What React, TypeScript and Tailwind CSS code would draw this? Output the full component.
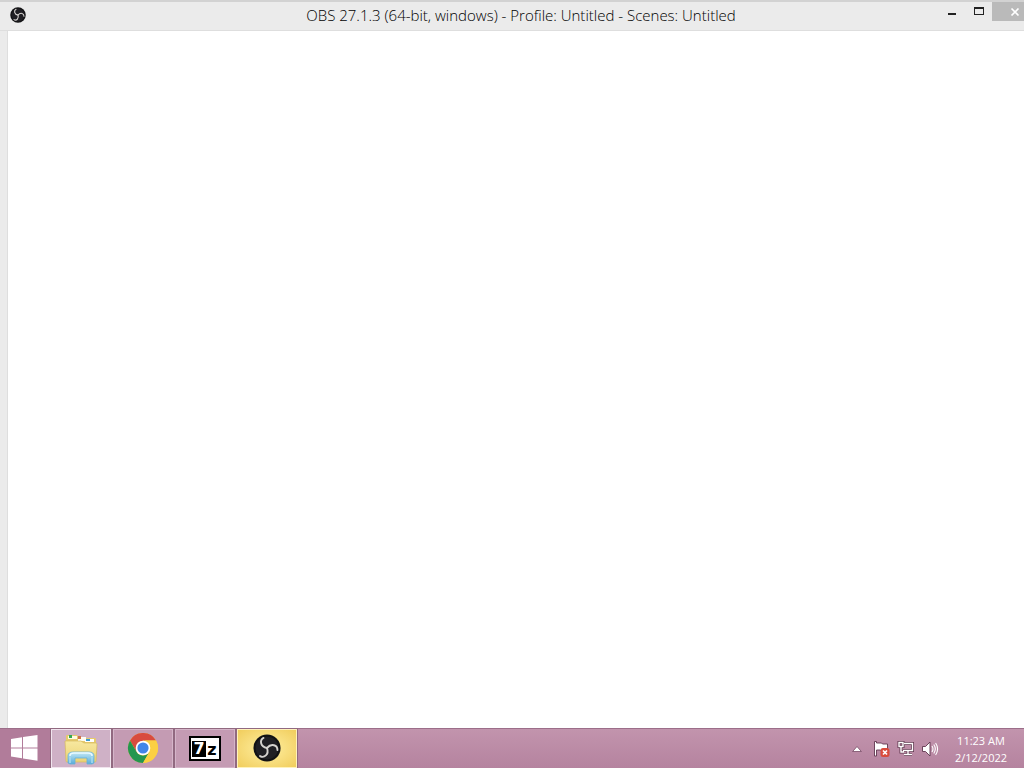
import type { ReactNode } from 'react';
import clsx from 'clsx';

interface TaskItem {
  label: string;
  icon: ReactNode;
  className: string;
}

function ObsIcon({ className }: { className: string }) {
  return (
    <svg className={className} viewBox="0 0 32 32" fill="none" aria-hidden="true">
      <circle cx="16" cy="16" r="15.5" fill="#121214" />
      <circle cx="16" cy="16" r="13" fill="#201f24" />
      <g stroke="#d5d2cf" strokeWidth="2.2" strokeLinecap="round">
        <path d="M12 4.5C7.5 7 8 14.500 16 16" />
        <path d="M12 4.5C7.5 7 8 14.500 16 16" transform="rotate(120 16 16)" />
        <path d="M12 4.5C7.5 7 8 14.500 16 16" transform="rotate(240 16 16)" />
      </g>
    </svg>
  );
}

function WindowsLogo() {
  return (
    <svg className="h-7 w-7" viewBox="0 0 28 28" fill="#fff" aria-hidden="true">
      <path d="M1 4L12 2.3V12.4H1zM13 2.1L27.5 0V12.4H13zM1 13.4H12V23.2L1 21.6zM13 13.4H27.5V25.7L13 23.5z" />
    </svg>
  );
}

function ExplorerIcon() {
  return (
    <svg className="h-8 w-9" viewBox="0 0 36 32" aria-hidden="true">
      <defs>
        <linearGradient id="folder" x1="0" y1="0" x2="0" y2="1">
          <stop offset="0" stopColor="#f7e8a0" />
          <stop offset="1" stopColor="#ecd375" />
        </linearGradient>
        <linearGradient id="stand" x1="0" y1="0" x2="0" y2="1">
          <stop offset="0" stopColor="#c5e9f5" />
          <stop offset="1" stopColor="#58acd9" />
        </linearGradient>
      </defs>
      <path d="M3 5V3q0-1 1-1h10l2 3h16q1 0 1 1v4H3z" fill="#e6cb6c" />
      <path d="M5 3h9v3H5z" fill="#fffbe2" />
      <path d="M6 2h3v3H6z" fill="#33a852" />
      <path d="M15 4h8v4h-8z" fill="#fffdf2" />
      <path d="M15 3h3v3h-3z" fill="#cf7448" />
      <path d="M22 6h9v3h-9z" fill="#fff" />
      <path d="M23 6h4v2h-4z" fill="#3f9cd0" />
      <path d="M2 8h16l3 2h12q1 0 1 1l-1 17q0 1-1 1H4q-1 0-1-1z" fill="url(#folder)" stroke="#d6b95e" strokeWidth=".7" />
      <path d="M5 30V23q0-4 5-4h16q5 0 5 4v7l-2 1h-5v-6H12v6H7z" fill="url(#stand)" stroke="#64b0d8" strokeWidth=".8" />
      <path d="M7 23q0-3 4-3h14q4 0 4 3" fill="none" stroke="#e9faff" strokeWidth="1.5" />
      <path d="M7 24v6M29 24v6" stroke="#a9dcef" strokeWidth="1.5" />
    </svg>
  );
}

function ChromeIcon() {
  return (
    <svg className="h-8 w-8" viewBox="0 0 32 32" aria-hidden="true">
      <circle cx="16" cy="15" r="15" fill="#fbd043" />
      <path d="M16 15L9.5 18.8 3 7.5A15 15 0 0 1 29 7.5H16z" fill="#d84b3f" />
      <path d="M3 7.5L9.5 18.8A7.5 7.5 0 0 0 22.5 18.8L16 30A15 15 0 0 1 3 7.5z" fill="#24964f" />
      <path d="M16 7.5H29A15 15 0 0 1 16 30L22.5 18.8A7.5 7.5 0 0 0 16 7.5z" fill="#fbd043" />
      <circle cx="16" cy="15" r="7.3" fill="#fff" />
      <circle cx="16" cy="15" r="5.6" fill="#4285e8" />
    </svg>
  );
}

function SevenZipIcon() {
  return (
    <span className="flex h-[25px] w-8 items-center justify-center border-2 border-black bg-white font-['DejaVu_Sans',sans-serif] text-base leading-none font-bold text-black">
      <span className="flex h-4 w-3.5 items-center justify-center bg-black text-white">7</span>
      <span className="w-3 pt-0.5 text-center">z</span>
    </span>
  );
}

const tasks: TaskItem[] = [
  { label: 'File Explorer', icon: <ExplorerIcon />, className: 'border-[#f1e4ee] bg-[#cfb1c6]' },
  { label: 'Google Chrome', icon: <ChromeIcon />, className: 'border-[#d5b5c9] bg-[#c49bb3]' },
  { label: '7-Zip', icon: <SevenZipIcon />, className: 'border-[#d5b5c9] bg-[#c49bb3]' },
  {
    label: 'OBS Studio',
    icon: <ObsIcon className="h-7 w-7" />,
    className: 'border-[#fff2bb] bg-radial from-[#fff0a0] to-[#f1cd5b] pb-0.5',
  },
];

function TitleBar() {
  return (
    <header className="flex h-[31px] shrink-0 items-start border-t-2 border-b border-t-[#d2d2d2] border-b-[#dedede] bg-[#ebebeb]">
      <div className="flex w-[94px] pt-[5px] pl-2.5">
        <ObsIcon className="h-4 w-4" />
      </div>
      <h1 className="flex-1 truncate pt-[3px] pl-2.5 text-center text-[15px] leading-5 font-light text-black">
        OBS 27.1.3 (64-bit, windows) - Profile: Untitled - Scenes: Untitled
      </h1>
      <div className="flex h-[19px]">
        <button type="button" aria-label="Minimize" className="flex w-[27px] justify-center pt-[11px]">
          <span className="h-0.5 w-2 bg-[#222]" />
        </button>
        <button type="button" aria-label="Maximize" className="flex w-[27px] justify-center pt-[5px]">
          <span className="h-2 w-2.5 border border-t-2 border-[#222]" />
        </button>
        <button type="button" aria-label="Close" className="flex w-8 items-center justify-end bg-[#bababa] pr-1">
          <svg className="h-2.5 w-2.5" viewBox="0 0 10 10" stroke="#fff" strokeWidth="1.7" aria-hidden="true">
            <path d="M1.5 1.5l7 7M8.5 1.5l-7 7" />
          </svg>
        </button>
      </div>
    </header>
  );
}

function Tray() {
  return (
    <div className="flex items-center">
      <button type="button" aria-label="Show hidden icons" className="flex h-5 w-5 items-center justify-center">
        <svg className="h-2.5 w-2.5" viewBox="0 0 8 8" aria-hidden="true">
          <path d="M0.5 6L4 2l3.5 4z" fill="#fff" stroke="#70435f" strokeWidth=".6" />
        </svg>
      </button>
      <button type="button" aria-label="Action Center" className="ml-1.5 w-[18px]">
        <svg className="h-[18px] w-[18px]" viewBox="0 0 18 18" aria-hidden="true">
          <path d="M1.5 1.5h2V3h5l1 1h5v7h-6l-1-1h-4v6h-2z" fill="#fff" stroke="#60374f" strokeWidth=".9" />
          <rect x="7.5" y="8" width="9" height="9" rx="2.5" fill="#d94c3d" />
          <path d="M10 10.5l4 4m0-4l-4 4" stroke="#fff" strokeWidth="1.7" />
        </svg>
      </button>
      <button type="button" aria-label="Network" className="ml-1.5 w-[18px]">
        <svg className="h-[18px] w-[18px]" viewBox="0 0 18 18" fill="none" aria-hidden="true">
          <g stroke="#60374f" strokeWidth="3">
            <path d="M7 3.5h8.5v7H6M11 11v3M7 14.5h8M2 2.5h4v4H2zM4 7v5h3" />
          </g>
          <g stroke="#fff" strokeWidth="1.4">
            <path d="M7 3.5h8.5v7H6M11 11v3M7 14.5h8M2 2.5h4v4H2zM4 7v5h3" />
          </g>
        </svg>
      </button>
      <button type="button" aria-label="Volume" className="ml-1.5 w-[18px]">
        <svg className="h-[18px] w-[18px]" viewBox="0 0 18 18" fill="none" aria-hidden="true">
          <path d="M1.5 6.5h3L9 2v14l-4.5-4.5h-3z" fill="#fff" stroke="#60374f" strokeWidth=".9" />
          <path d="M11 6q2 3 0 6M12.8 4.5q3 4.5 0 9M14.6 3q4 6 0 12" stroke="#fff" strokeWidth="1.1" />
        </svg>
      </button>
    </div>
  );
}

function Taskbar() {
  return (
    <footer className="flex h-10 shrink-0 border-t border-[#9c6e89] bg-linear-to-b from-[#c294ad] to-[#b5839f]">
      <button type="button" aria-label="Start" className="flex w-[51px] items-center bg-[#b17c9a] pl-2.5">
        <WindowsLogo />
      </button>
      <nav aria-label="Running programs" className="flex gap-0.5">
        {tasks.map((task) => (
          <button
            key={task.label}
            type="button"
            aria-label={task.label}
            className={clsx(
              'flex w-[60px] items-center justify-center border outline outline-[#916980]',
              task.className
            )}
          >
            {task.icon}
          </button>
        ))}
      </nav>
      <div className="ml-auto flex pr-2">
        <Tray />
        <div className="ml-[7px] w-[70px] pt-[3px] text-center text-[11px] leading-[17px] text-white">
          <time className="block">11:23 AM</time>
          <time className="block">2/12/2022</time>
        </div>
      </div>
    </footer>
  );
}

export default function App() {
  return (
    <div className="flex h-screen flex-col overflow-hidden bg-white font-['Open_Sans','Noto_Sans',sans-serif]">
      <TitleBar />
      <div className="flex flex-1 bg-[#ebebeb] pl-[7px]">
        <main className="flex-1 border-l border-[#dedede] bg-white" />
      </div>
      <Taskbar />
    </div>
  );
}
